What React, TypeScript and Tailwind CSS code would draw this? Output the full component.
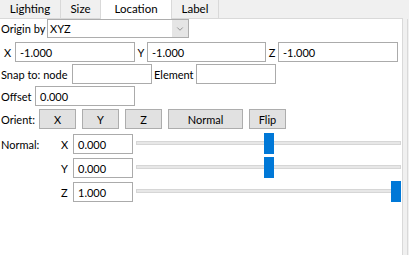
import { ChevronDown } from "lucide-react";

function Field({ value, w }: { value: string; w: string }) {
  return (
    <div className={`${w} shrink-0 h-[20px] border border-[#ababab] bg-white flex items-center pl-[4px]`}>
      {value}
    </div>
  );
}

function Btn({ label, w }: { label: string; w: string }) {
  return (
    <div className={`${w} shrink-0 h-[20px] border border-[#adadad] bg-[#e1e1e1] flex items-center justify-center`}>
      {label}
    </div>
  );
}

function Slider({ value }: { value: number }) {
  // value in [-1, 1]; thumb is 10px wide on a 265px track
  const left = ((value + 1) / 2) * (265 - 10);
  return (
    <div className="relative shrink-0 w-[265px] h-[20px] ml-[3px] flex items-center">
      <div className="w-full h-[4px] mt-[-2px] border border-[#d6d6d6] bg-[#e7e7e7]" />
      <div className="absolute top-[-1px] w-[10px] h-[21px] bg-[#0078d7]" style={{ left }} />
    </div>
  );
}

const tabs = [
  { name: "Lighting", w: "w-[61px]" },
  { name: "Size", w: "w-[40px]" },
  { name: "Location", w: "w-[71px]", active: true },
  { name: "Label", w: "w-[47px]" },
];

const normals = [
  { axis: "X", value: 0 },
  { axis: "Y", value: 0 },
  { axis: "Z", value: 1 },
];

export default function App() {
  return (
    <div className="w-[409px] h-[255px] bg-[#f0f0f0] flex flex-col text-[11px] leading-none whitespace-nowrap text-black font-['Lato',sans-serif] overflow-hidden">
      <div className="flex h-[19px] shrink-0 text-[11.5px]">
        {tabs.map((t) => (
          <div
            key={t.name}
            className={`${t.w} shrink-0 flex items-center justify-center pb-px border-r border-[#d9d9d9] ${
              t.active ? "bg-white" : "border-b"
            }`}
          >
            {t.name}
          </div>
        ))}
        <div className="w-[184px] shrink-0 border-b border-[#d9d9d9]" />
      </div>

      <div className="flex flex-1">
        <div className="w-[403px] shrink-0 bg-white border-r border-[#d9d9d9] flex flex-col">
          <div className="flex items-center h-[19px]">
            <span className="w-[47px] shrink-0 pl-px">Origin by</span>
            <div className="w-[142px] shrink-0 h-[19px] border border-[#adadad] flex items-center">
              <span className="flex-1 pl-[2px]">XYZ</span>
              <div className="w-[16px] h-full bg-[#e5e5e5] flex items-center justify-center text-[#606060]">
                <ChevronDown size={10} strokeWidth={1.5} />
              </div>
            </div>
          </div>

          <div className="flex items-center mt-[4px]">
            <span className="w-[15px] shrink-0 text-center">X</span>
            <Field value="-1.000" w="w-[120px]" />
            <span className="w-[12px] shrink-0 text-center">Y</span>
            <Field value="-1.000" w="w-[119px]" />
            <span className="w-[12px] shrink-0 text-center">Z</span>
            <Field value="-1.000" w="w-[120px]" />
          </div>

          <div className="flex items-center mt-[2px]">
            <span className="w-[72px] shrink-0 pl-px">Snap to: node</span>
            <Field value="" w="w-[80px]" />
            <span className="w-[44px] shrink-0 pl-[2px]">Element</span>
            <Field value="" w="w-[80px]" />
          </div>

          <div className="flex items-center mt-[2px]">
            <span className="w-[35px] shrink-0 pl-px">Offset</span>
            <Field value="0.000" w="w-[100px]" />
          </div>

          <div className="flex items-center gap-[6px] mt-[3px]">
            <span className="w-[33px] shrink-0 pl-px">Orient:</span>
            <Btn label="X" w="w-[37px]" />
            <Btn label="Y" w="w-[37px]" />
            <Btn label="Z" w="w-[37px]" />
            <Btn label="Normal" w="w-[75px]" />
            <Btn label="Flip" w="w-[37px]" />
          </div>

          <div className="flex flex-col gap-[4px] mt-[5px]">
            {normals.map((n, i) => (
              <div key={n.axis} className="flex items-center">
                <span className="w-[61px] shrink-0 pl-px">{i === 0 ? "Normal:" : ""}</span>
                <span className="w-[12px] shrink-0">{n.axis}</span>
                <Field value={n.value.toFixed(3)} w="w-[60px]" />
                <Slider value={n.value} />
              </div>
            ))}
          </div>
        </div>
        <div className="w-[4px] shrink-0" />
        <div className="w-px shrink-0 bg-[#d9d9d9]" />
        <div className="flex-1" />
      </div>
    </div>
  );
}
